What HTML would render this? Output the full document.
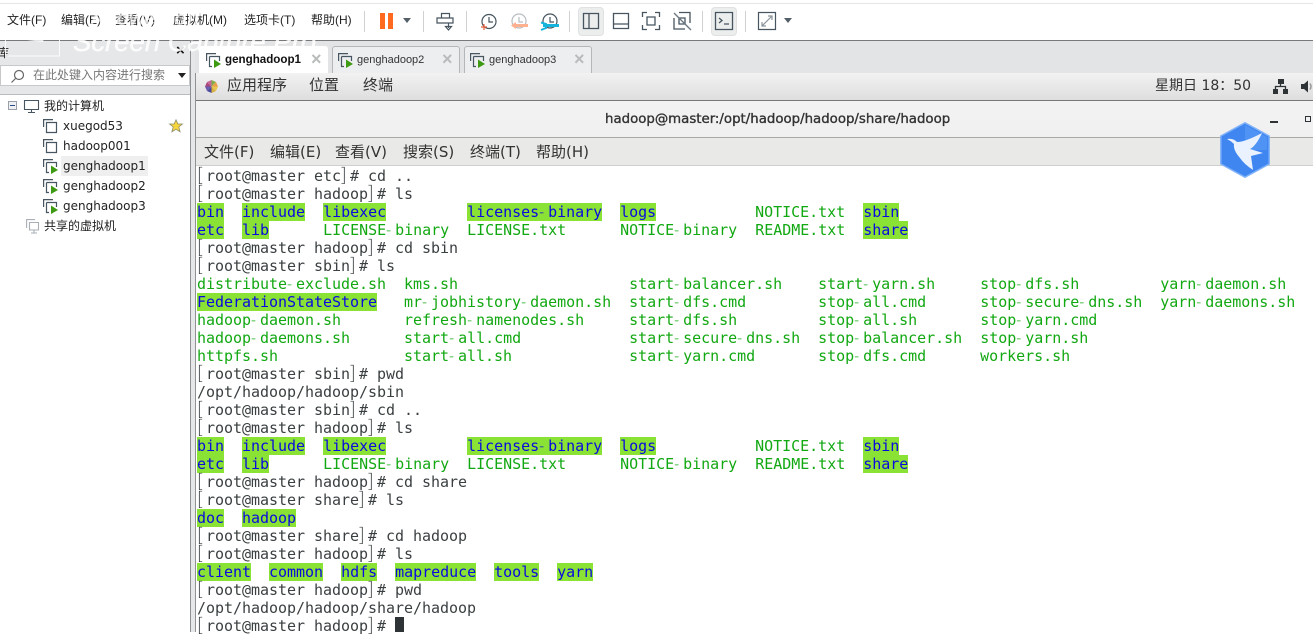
<!DOCTYPE html>
<html lang="zh"><head><meta charset="utf-8"><title>VMware</title>
<style>
html,body{margin:0;padding:0;background:#fff}
body{width:1313px;height:632px;overflow:hidden;position:relative;font-family:"Liberation Sans","Noto Sans CJK SC",sans-serif;color:#222}
.a{position:absolute;white-space:nowrap}
.m{font-size:12px;top:12px;line-height:16px;color:#222}
svg{position:absolute;overflow:visible}
.sep{position:absolute;top:11px;width:1px;height:21px;background:#cfd1d3}
.tab{position:absolute;top:46px;height:27px;background:#eceef0;border:1px solid #b4b6b8;border-bottom:none;border-radius:3px 3px 0 0;box-sizing:border-box;font-size:11px;line-height:26px;color:#333}
.x{position:absolute;top:-1px;color:#b9bbbd;font-size:18px;font-weight:bold}
.t{font-family:"DejaVu Sans","Noto Sans CJK SC",sans-serif;font-size:12px;line-height:16px;color:#222}
.g{font-family:"DejaVu Sans","Noto Sans CJK SC",sans-serif;font-size:15px;line-height:18px;color:#333}
#term{position:absolute;left:197px;top:167px;margin:0;font:15px/18px "DejaVu Sans Mono","Liberation Mono",monospace;letter-spacing:-.03px;color:#3a3f41}
#term i{font-style:normal;color:#0a0ae0;background:#8ae234;display:inline-block;height:18px;vertical-align:top}
#term b{font-weight:normal;color:#12a812}
#term s,#term u{text-decoration:none;display:inline-block;width:9px;line-height:0;font-family:"Noto Sans CJK SC",sans-serif;font-weight:300;text-align:left}
#term u{font-size:18px;color:#2e3436}
</style></head><body>

<!-- toolbar -->
<div class="a" style="left:0;top:0;width:1313px;height:41px;background:#fff;border-bottom:1px solid #77797b;box-sizing:border-box"></div>
<div class="a" style="left:0;top:3px;width:1313px;height:1px;background:#e6e6e6"></div>
<div class="a m" style="left:7px">文件(F)</div>
<div class="a m" style="left:61px">编辑(E)</div>
<div class="a m" style="left:115px">查看(V)</div>
<div class="a m" style="left:173px">虚拟机(M)</div>
<div class="a m" style="left:244px">选项卡(T)</div>
<div class="a m" style="left:311px">帮助(H)</div>
<div class="sep" style="left:364px"></div>
<div class="a" style="left:380px;top:13px;width:5px;height:16px;background:#ff6a1f"></div>
<div class="a" style="left:388px;top:13px;width:5px;height:16px;background:#ff6a1f"></div>
<svg style="left:403px;top:18px" width="10" height="6"><path d="M0 0H8L4 5z" fill="#555f68"/></svg>
<div class="sep" style="left:423px"></div>
<svg style="left:436px;top:12px" width="20" height="20" fill="none" stroke="#46555f" stroke-width="1.2"><path d="M5.500 1.500H13.500V6H5.500zM1 6H17V11H1zM12.500 11V16M9.500 14.500L12.500 18L15.500 14.500z"/></svg>
<div class="sep" style="left:466px"></div>
<svg style="left:480px;top:13px" width="20" height="20" fill="none" stroke="#46555f" stroke-width="1.2"><circle cx="9" cy="8.500" r="7"/><path d="M9 4V9H13"/><path d="M1 14H7M4 11V17" stroke="#e8603c"/></svg>
<svg style="left:510px;top:13px" width="20" height="20" fill="none" stroke="#b8bec2" stroke-width="1.2"><circle cx="9" cy="8" r="7"/><path d="M9 4V9H13"/><path d="M4 12.500H18" stroke="#ffb08f" stroke-width="3"/><path d="M1 12.500L6 9V16z" fill="#ffb08f" stroke="none"/></svg>
<svg style="left:540px;top:13px" width="20" height="20" fill="none" stroke="#46555f" stroke-width="1.2"><circle cx="10" cy="8" r="7"/><path d="M10 4V9H14"/><path d="M3 12.500H19" stroke="#16b4dc" stroke-width="3"/><path d="M1 9.500L6 11V15L1 17" stroke="#16b4dc" stroke-width="2"/></svg>
<div class="sep" style="left:569px"></div>
<div class="a" style="left:578px;top:7px;width:26px;height:29px;background:#eceded;border:1px solid #e0e1e2;border-radius:4px;box-sizing:border-box"></div>
<svg style="left:583px;top:13px" width="16" height="16" fill="none" stroke="#46555f" stroke-width="1.300"><path d="M.5 .5H15.500V15.500H.5zM6 .5V15.500"/></svg>
<svg style="left:613px;top:13px" width="16" height="16" fill="none" stroke="#46555f" stroke-width="1.300"><path d="M.5 .5H15.500V15.500H.5zM.5 11H15.500"/></svg>
<svg style="left:642px;top:12px" width="18" height="18" fill="none" stroke="#46555f" stroke-width="1.300"><path d="M.5 5V.5H5M13 .5H17.500V5M17.500 13V17.500H13M5 17.500H.5V13M5 5H13V13H5z"/></svg>
<svg style="left:673px;top:12px" width="18" height="18" fill="none" stroke="#46555f" stroke-width="1.300"><path d="M6 .5H17V11M12 17H1V6M6 6H12V12H6z"/><path d="M1 1L18 18" stroke="#6b7780"/></svg>
<div class="sep" style="left:702px"></div>
<div class="a" style="left:711px;top:7px;width:26px;height:29px;background:#eceded;border:1px solid #e0e1e2;border-radius:4px;box-sizing:border-box"></div>
<svg style="left:715px;top:12px" width="18" height="18" fill="none" stroke="#46555f" stroke-width="1.300"><path d="M.5 .5H17.500V17.500H.5zM4 6L7 8.500L4 11M9 12H14"/></svg>
<div class="sep" style="left:745px"></div>
<svg style="left:758px;top:12px" width="18" height="18" fill="none" stroke="#46555f" stroke-width="1.200"><path d="M.5 .5H17.500V17.500H.5z"/><path d="M4 14L14 4M10 4H14V8M4 10V14H8" stroke="#8a949b"/></svg>
<svg style="left:784px;top:18px" width="10" height="6"><path d="M0 0H8L4 5z" fill="#555f68"/></svg>

<!-- left panel -->
<div class="a" style="left:0;top:41px;width:195px;height:591px;background:#e6e7e8"></div>
<div class="a" style="left:190px;top:41px;width:1px;height:591px;background:#8f9193"></div>
<div class="a" style="left:-3px;top:45px;font-size:12px;line-height:16px;color:#222">库</div>
<div class="a" style="left:176px;top:43px;font-size:15px;line-height:16px;color:#111;font-weight:bold">×</div>
<div class="a" style="left:0;top:65px;width:190px;height:21px;background:#fff;border:1px solid #c6c8ca;box-sizing:border-box"></div>
<svg style="left:10px;top:69px" width="15" height="15" fill="none" stroke="#666" stroke-width="1.200"><circle cx="9" cy="6" r="4.500"/><path d="M5.500 9.500L1.500 13.500"/></svg>
<div class="a" style="left:33px;top:68px;font-size:12px;line-height:15px;color:#777">在此处键入内容进行搜索</div>
<svg style="left:178px;top:73px" width="8" height="6"><path d="M0 0H8L4 5z" fill="#222"/></svg>
<div class="a" style="left:0;top:94px;width:190px;height:538px;background:#fff;border-top:1px solid #b9bbbd;box-sizing:border-box"></div>

<svg style="left:8px;top:101px" width="10" height="10"><rect x=".5" y=".5" width="8" height="8" fill="#eef0f4" stroke="#9aa0a8"/><path d="M2 4.500H7" stroke="#2a4a8a"/></svg>
<svg style="left:24px;top:100px" width="16" height="14" fill="none" stroke="#46555f" stroke-width="1.100"><path d="M.5 .5H14.500V9.500H.5zM7.500 10V12.500M4 12.500H11"/></svg>
<div class="a t" style="left:44px;top:98px">我的计算机</div>
<svg style="left:43px;top:119px" width="16" height="15" fill="none" stroke="#46555f" stroke-width="1.200"><path d="M.6 8V.6H10M3.500 3.500H13.500V13.500H3.500z" /></svg>
<div class="a t" style="left:63px;top:118px">xuegod53</div>
<svg style="left:169px;top:119px" width="14" height="14"><path d="M7 .8L8.900 5H13.400L9.800 8L11.100 12.800L7 10.200L2.900 12.800L4.200 8L.6 5H5.100z" fill="#f7d63c" stroke="#8a8a6a" stroke-width=".8"/></svg>
<svg style="left:43px;top:139px" width="16" height="15" fill="none" stroke="#46555f" stroke-width="1.200"><path d="M.6 8V.6H10M3.500 3.500H13.500V13.500H3.500z"/></svg>
<div class="a t" style="left:63px;top:138px">hadoop001</div>
<div class="a" style="left:61px;top:156px;width:87px;height:20px;background:#efefef"></div>
<svg style="left:43px;top:159px" width="16" height="15" fill="none" stroke="#46555f" stroke-width="1.200"><path d="M.6 8V.6H10M3.500 3.500H13.500V8M3.500 3.500V13.500H6"/><path d="M8 6.500L15 11L8 15z" fill="#3e9a12" stroke="none"/></svg>
<div class="a t" style="left:63px;top:158px">genghadoop1</div>
<svg style="left:43px;top:179px" width="16" height="15" fill="none" stroke="#46555f" stroke-width="1.200"><path d="M.6 8V.6H10M3.500 3.500H13.500V8M3.500 3.500V13.500H6"/><path d="M8 6.500L15 11L8 15z" fill="#3e9a12" stroke="none"/></svg>
<div class="a t" style="left:63px;top:178px">genghadoop2</div>
<svg style="left:43px;top:199px" width="16" height="15" fill="none" stroke="#46555f" stroke-width="1.200"><path d="M.6 8V.6H10M3.500 3.500H13.500V8M3.500 3.500V13.500H6"/><path d="M8 6.500L15 11L8 15z" fill="#3e9a12" stroke="none"/></svg>
<div class="a t" style="left:63px;top:198px">genghadoop3</div>
<svg style="left:26px;top:219px" width="14" height="15" fill="none" stroke="#a9afb4" stroke-width="1.100"><path d="M.6 9V.6H9M3.500 3.500H12.500V11H3.500zM8 11V14M5 14H11"/></svg>
<div class="a t" style="left:44px;top:218px">共享的虚拟机</div>

<!-- tabs strip -->
<div class="a" style="left:195px;top:41px;width:1118px;height:32px;background:#e3e4e6"></div>
<div class="tab" style="left:199px;width:129px;background:#fff;border-color:#fff"><span class="a" style="left:25px;font-weight:bold;color:#111;font-size:11.600px">genghadoop1</span><span class="x" style="left:111px;line-height:26px">×</span></div>
<svg style="left:206px;top:53px" width="16" height="15" fill="none" stroke="#46555f" stroke-width="1.200"><path d="M.6 8V.6H10M3.500 3.500H13.500V8M3.500 3.500V13.500H6"/><path d="M8 6.500L15 11L8 15z" fill="#3e9a12" stroke="none"/></svg>
<div class="tab" style="left:332px;width:128px"><span class="a" style="left:24px">genghadoop2</span><span class="x" style="left:109px;line-height:26px">×</span></div>
<svg style="left:338px;top:53px" width="16" height="15" fill="none" stroke="#46555f" stroke-width="1.200"><path d="M.6 8V.6H10M3.500 3.500H13.500V8M3.500 3.500V13.500H6"/><path d="M8 6.500L15 11L8 15z" fill="#3e9a12" stroke="none"/></svg>
<div class="tab" style="left:464px;width:128px"><span class="a" style="left:24px">genghadoop3</span><span class="x" style="left:109px;line-height:26px">×</span></div>
<svg style="left:470px;top:53px" width="16" height="15" fill="none" stroke="#46555f" stroke-width="1.200"><path d="M.6 8V.6H10M3.500 3.500H13.500V8M3.500 3.500V13.500H6"/><path d="M8 6.500L15 11L8 15z" fill="#3e9a12" stroke="none"/></svg>

<!-- guest area -->
<div class="a" style="left:195px;top:73px;width:1118px;height:559px;background:#fff"></div>
<div class="a" style="left:195px;top:73px;width:1px;height:559px;background:#8f9193"></div>
<!-- gnome top bar -->
<div class="a" style="left:196px;top:73px;width:1117px;height:27px;background:linear-gradient(#f2f2f2,#dedede);border-bottom:1px solid #777;box-sizing:content-box"></div>
<svg style="left:204px;top:79px" width="15" height="15" viewBox="0 0 15 15"><path d="M7.500 7.500L3 3L1 7.500z" fill="#a8477a"/><path d="M7.500 7.500L3 3L7.500 1z" fill="#c8689a"/><path d="M7.500 7.500L12 3L7.500 1z" fill="#7fae4a"/><path d="M7.500 7.500L12 3L14 7.500z" fill="#e8a04a"/><path d="M7.500 7.500L12 12L14 7.500z" fill="#e8c850"/><path d="M7.500 7.500L12 12L7.500 14z" fill="#d8b040"/><path d="M7.500 7.500L3 12L7.500 14z" fill="#4a4a9a"/><path d="M7.500 7.500L3 12L1 7.500z" fill="#6a5ab0"/></svg>
<div class="a g" style="left:227px;top:76px">应用程序</div>
<div class="a g" style="left:309px;top:76px">位置</div>
<div class="a g" style="left:363px;top:76px">终端</div>
<div class="a g" style="left:1155px;top:77px;font-size:14px">星期日 18：50</div>
<svg style="left:1273px;top:79px" width="16" height="15" fill="#2e3436"><rect x="5" y="0" width="6" height="5"/><rect x="0" y="10" width="5" height="5"/><rect x="10" y="10" width="5" height="5"/><path d="M7.500 5V8M2.500 10V7.500H12.500V10" fill="none" stroke="#2e3436" stroke-width="1.300"/></svg>
<svg style="left:1301px;top:80px" width="12" height="13"><path d="M0 4H3L7 .5V12.500L3 9H0z" fill="#2e3436"/><path d="M9 3.500Q11 6.500 9 9.500" fill="none" stroke="#999" stroke-width="1.500"/></svg>
<!-- title bar -->
<div class="a" style="left:196px;top:101px;width:1117px;height:36px;background:linear-gradient(#f3f3f3,#f0f0f0);border-bottom:1px solid #a9a9a6"></div>
<div class="a" style="left:605px;top:111px;font-family:'DejaVu Sans',sans-serif;font-size:13.340px;line-height:18px;color:#333;-webkit-text-stroke:.35px #333">hadoop@master:/opt/hadoop/hadoop/share/hadoop</div>
<div class="a" style="left:1270px;top:121px;width:8px;height:2px;background:#2e3436"></div>
<div class="a" style="left:1305px;top:116px;width:6px;height:6px;border:1.500px solid #2e3436;box-sizing:border-box"></div>
<!-- menu bar -->
<div class="a" style="left:196px;top:138px;width:1117px;height:27px;background:#e9e9e7;border-bottom:1px solid #cfcfcd;box-sizing:content-box"></div>
<div class="a g" style="left:204px;top:143px">文件(F)</div>
<div class="a g" style="left:270px;top:143px">编辑(E)</div>
<div class="a g" style="left:335px;top:143px">查看(V)</div>
<div class="a g" style="left:403px;top:143px">搜索(S)</div>
<div class="a g" style="left:470px;top:143px">终端(T)</div>
<div class="a g" style="left:536px;top:143px">帮助(H)</div>

<!-- terminal -->
<pre id="term"><u>[</u>root@master etc<u>]</u># cd ..
<u>[</u>root@master hadoop<u>]</u># ls
<i>bin</i>  <i>include</i>  <i>libexec</i>         <i>licenses<s>-</s>binary</i>  <i>logs</i>           <b>NOTICE.txt</b>  <i>sbin</i>
<i>etc</i>  <i>lib</i>      <b>LICENSE<s>-</s>binary</b>  <b>LICENSE.txt</b>      <b>NOTICE<s>-</s>binary</b>  <b>README.txt</b>  <i>share</i>
<u>[</u>root@master hadoop<u>]</u># cd sbin
<u>[</u>root@master sbin<u>]</u># ls
<b>distribute<s>-</s>exclude.sh</b>  <b>kms.sh</b>                   <b>start<s>-</s>balancer.sh</b>    <b>start<s>-</s>yarn.sh</b>     <b>stop<s>-</s>dfs.sh</b>         <b>yarn<s>-</s>daemon.sh</b>
<i>FederationStateStore</i>   <b>mr<s>-</s>jobhistory<s>-</s>daemon.sh</b>  <b>start<s>-</s>dfs.cmd</b>        <b>stop<s>-</s>all.cmd</b>      <b>stop<s>-</s>secure<s>-</s>dns.sh</b>  <b>yarn<s>-</s>daemons.sh</b>
<b>hadoop<s>-</s>daemon.sh</b>       <b>refresh<s>-</s>namenodes.sh</b>     <b>start<s>-</s>dfs.sh</b>         <b>stop<s>-</s>all.sh</b>       <b>stop<s>-</s>yarn.cmd</b>
<b>hadoop<s>-</s>daemons.sh</b>      <b>start<s>-</s>all.cmd</b>            <b>start<s>-</s>secure<s>-</s>dns.sh</b>  <b>stop<s>-</s>balancer.sh</b>  <b>stop<s>-</s>yarn.sh</b>
<b>httpfs.sh</b>              <b>start<s>-</s>all.sh</b>             <b>start<s>-</s>yarn.cmd</b>       <b>stop<s>-</s>dfs.cmd</b>      <b>workers.sh</b>
<u>[</u>root@master sbin<u>]</u># pwd
/opt/hadoop/hadoop/sbin
<u>[</u>root@master sbin<u>]</u># cd ..
<u>[</u>root@master hadoop<u>]</u># ls
<i>bin</i>  <i>include</i>  <i>libexec</i>         <i>licenses<s>-</s>binary</i>  <i>logs</i>           <b>NOTICE.txt</b>  <i>sbin</i>
<i>etc</i>  <i>lib</i>      <b>LICENSE<s>-</s>binary</b>  <b>LICENSE.txt</b>      <b>NOTICE<s>-</s>binary</b>  <b>README.txt</b>  <i>share</i>
<u>[</u>root@master hadoop<u>]</u># cd share
<u>[</u>root@master share<u>]</u># ls
<i>doc</i>  <i>hadoop</i>
<u>[</u>root@master share<u>]</u># cd hadoop
<u>[</u>root@master hadoop<u>]</u># ls
<i>client</i>  <i>common</i>  <i>hdfs</i>  <i>mapreduce</i>  <i>tools</i>  <i>yarn</i>
<u>[</u>root@master hadoop<u>]</u># pwd
/opt/hadoop/hadoop/share/hadoop
<u>[</u>root@master hadoop<u>]</u># </pre>
<div class="a" style="left:395px;top:617px;width:9px;height:15px;background:#2e3436"></div>

<!-- floating bird badge -->
<svg style="left:1220px;top:122px" width="50" height="56" viewBox="0 0 50 56"><path d="M25 .8L49.200 14V42L25 55.200L.8 42V14z" fill="#3f86f0" stroke="#80b2f9" stroke-width="1.500" stroke-linejoin="round"/><path d="M25 3L47 15V28L25 28z" fill="#4f94f5"/><path d="M7 17Q13 16 17 20Q25 20 42 11Q36 24 30 27L43 31L31 34L33 48Q24 42 20 36Q13 28 14 22Q11 19 7 17z" fill="#eaf2ff"/></svg>

<!-- watermark -->
<div class="a" style="left:90px;top:8px;font-size:20px;line-height:22px;font-weight:bold;font-style:italic;color:rgba(255,255,255,.72)">Apowersoft</div>
<div class="a" style="left:73px;top:27px;font-size:27.500px;line-height:30px;font-style:italic;-webkit-text-stroke:.4px rgba(255,255,255,.85);color:rgba(255,255,255,.85)">Screen Capture Pro</div>
<svg style="left:5px;top:6px" width="56" height="52" fill="none" stroke="rgba(255,255,255,.85)" stroke-width="1"><path d="M.5 .5H54.500V50H.5z"/><path d="M22 34L42 20L38 36z" fill="rgba(255,255,255,.8)" stroke="none"/></svg>
</body></html>
